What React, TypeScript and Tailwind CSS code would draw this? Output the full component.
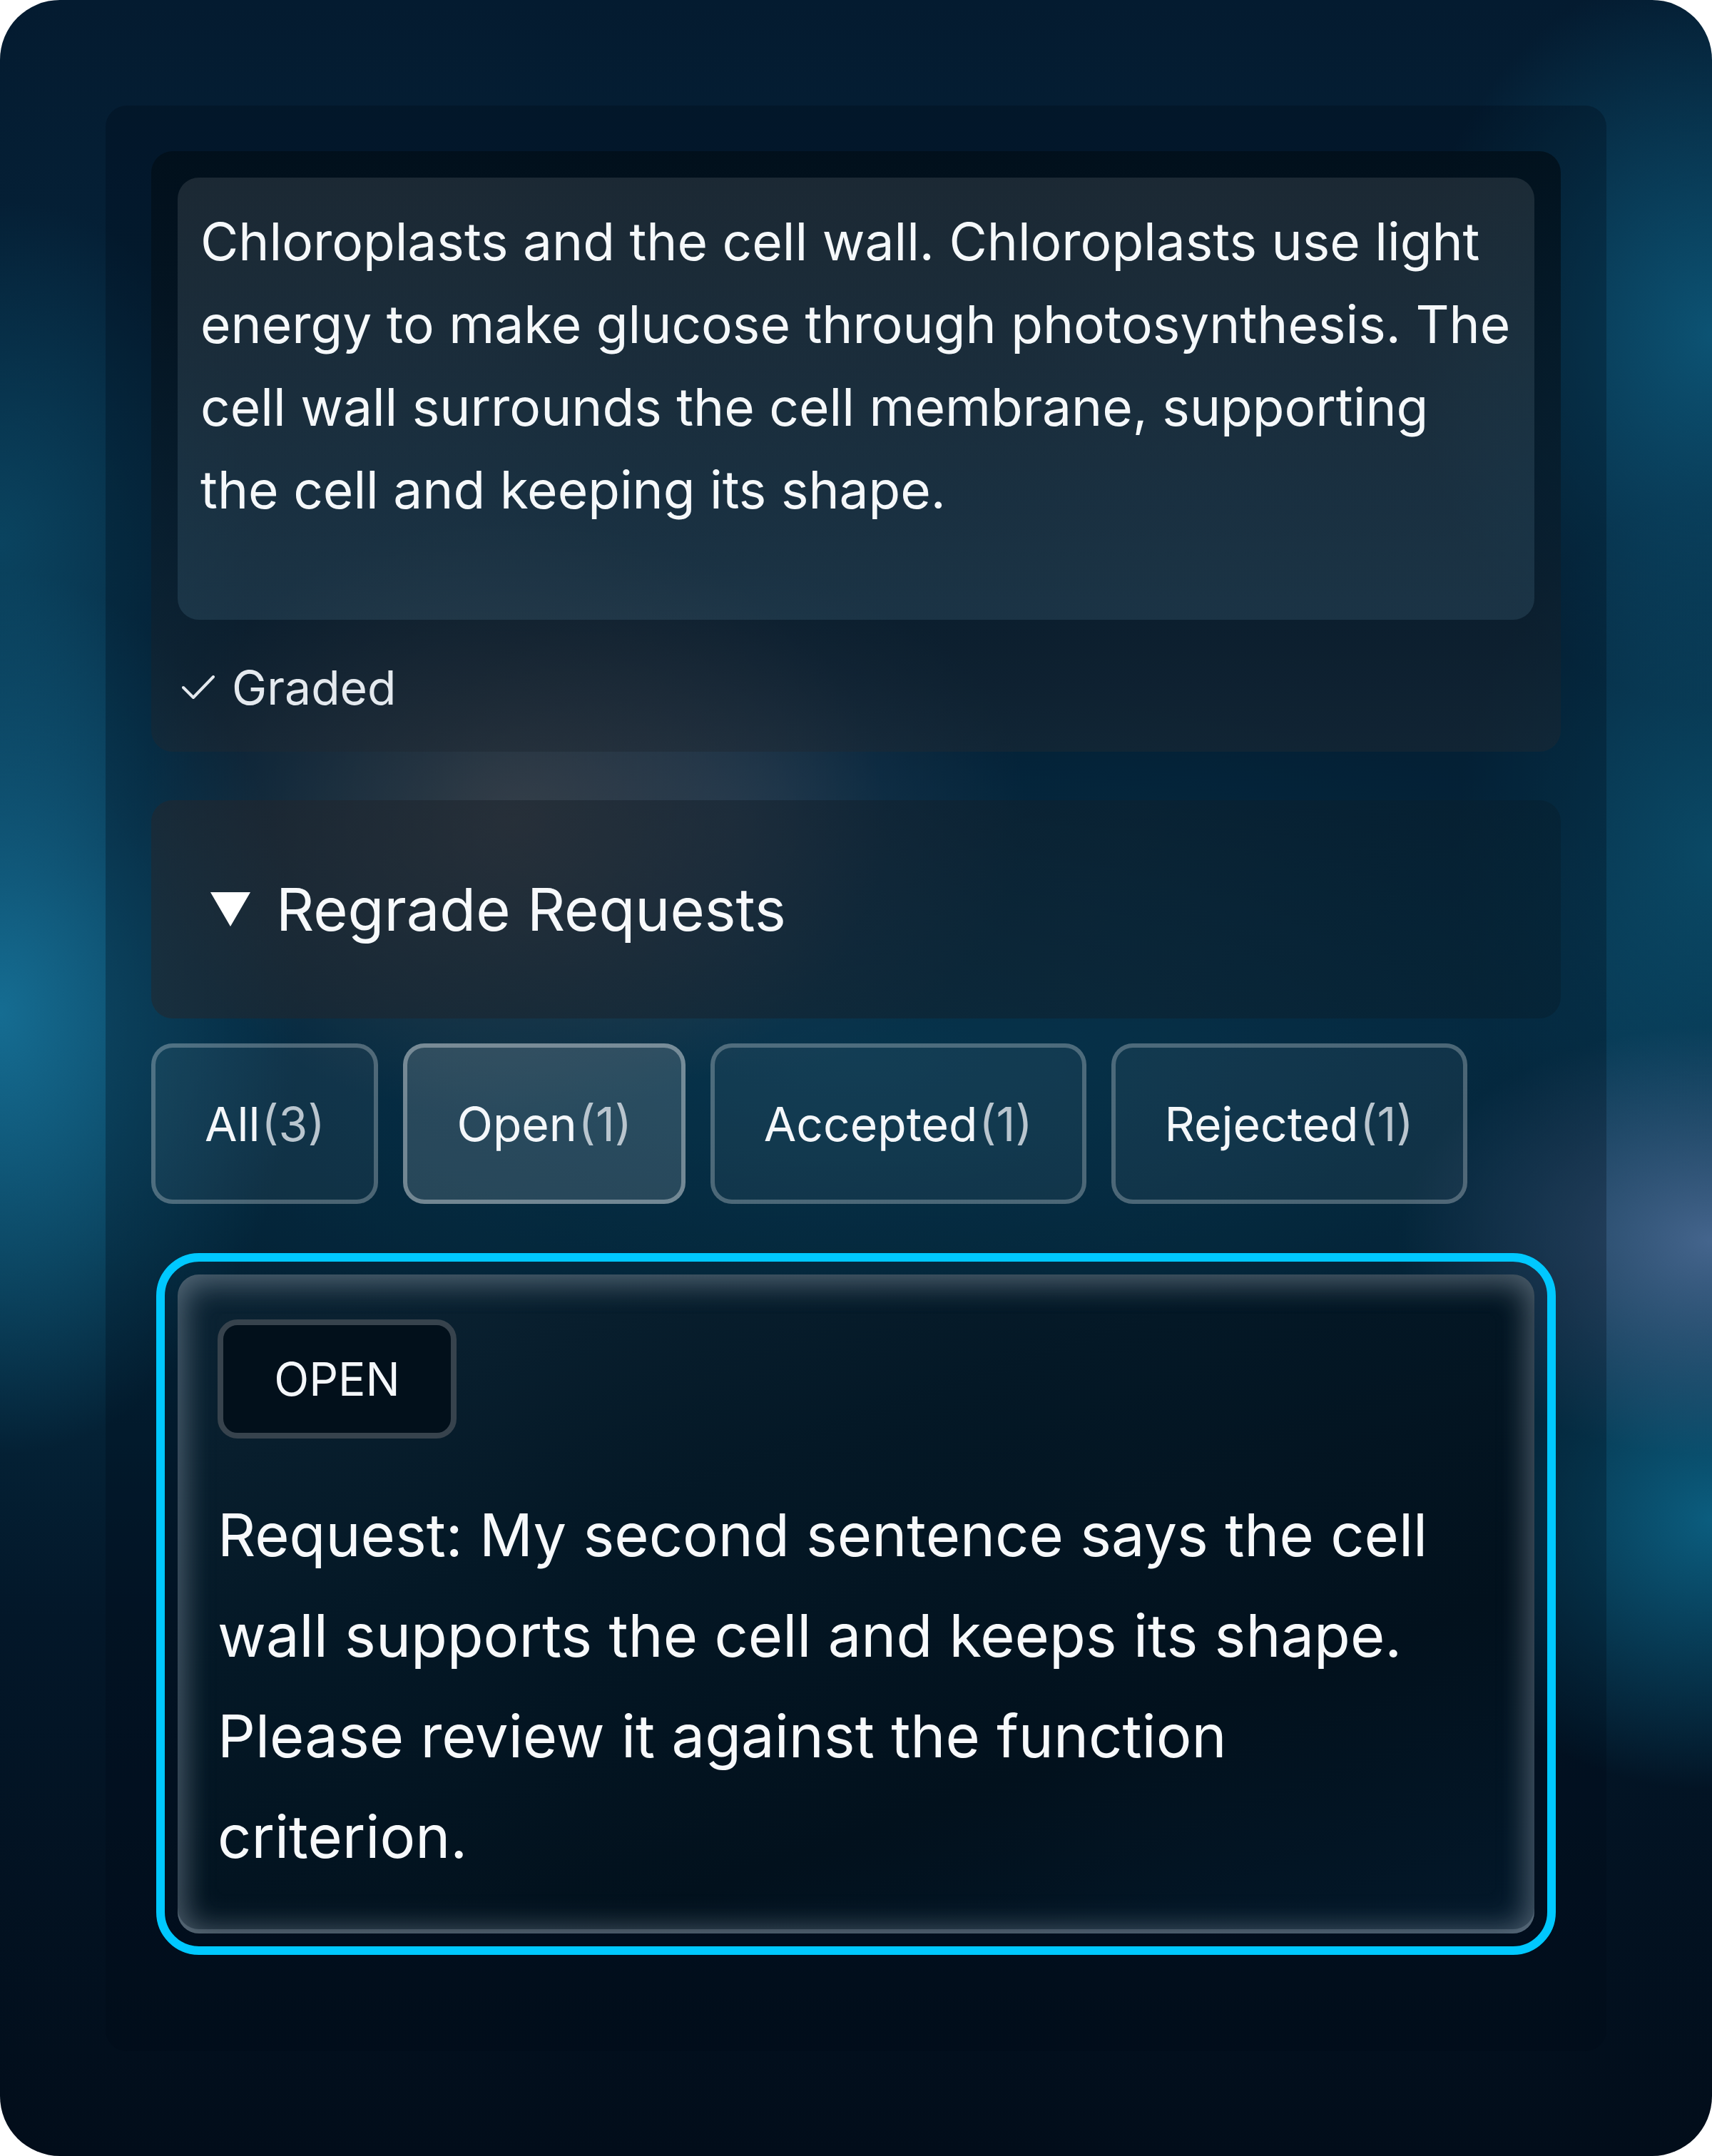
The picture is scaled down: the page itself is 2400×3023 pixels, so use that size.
import React from "react";

function FilterButton({ label, count, active }: { label: string; count: number; active?: boolean }) {
  return (
    <div
      className={
        "flex h-[225px] items-center justify-center rounded-[30px] border-[6px] px-[69px] " +
        (active ? "border-white/35 bg-white/[0.14]" : "border-white/25 bg-white/[0.05]")
      }
    >
      <span className="text-[66px] leading-none text-[#f4f7fa]">{label}</span>
      <span className="ml-[2px] text-[66px] leading-none text-[#b9c5ce]">({count})</span>
    </div>
  );
}

export default function App() {
  return (
    <div className="h-[3023px] w-[2400px] bg-white [font-family:Inter,'Noto_Sans',sans-serif]">
      <div className="h-[3023px] w-[2400px] overflow-hidden rounded-[84px] pt-[148px] pr-[148px] pb-[147px] pl-[148px] [background-image:radial-gradient(ellipse_520px_420px_at_720px_1150px,rgba(125,110,105,0.55),transparent),radial-gradient(ellipse_420px_360px_at_1020px_1150px,rgba(70,95,125,0.45),transparent),radial-gradient(ellipse_420px_620px_at_0px_1420px,rgba(22,112,150,0.95),transparent),radial-gradient(ellipse_360px_480px_at_0px_760px,rgba(12,80,110,0.7),transparent),radial-gradient(ellipse_420px_520px_at_2400px_470px,rgba(14,95,130,0.8),transparent),radial-gradient(ellipse_440px_300px_at_2400px_1740px,rgba(72,104,145,0.95),transparent),radial-gradient(ellipse_420px_380px_at_2400px_2130px,rgba(12,100,135,0.9),transparent),radial-gradient(ellipse_360px_500px_at_2400px_1200px,rgba(12,85,115,0.7),transparent),radial-gradient(ellipse_1300px_520px_at_1200px_1480px,rgba(14,85,115,0.6),transparent),linear-gradient(180deg,#041b30_0%,#062840_30%,#06304a_48%,#052c42_58%,#031729_75%,#020d1a_100%)]">
        <div className="flex h-full flex-col rounded-[30px] bg-[rgba(0,10,22,0.3)] px-[64px] pt-[64px]">
          {/* Answer card */}
          <div className="rounded-[30px] bg-[linear-gradient(180deg,rgba(1,14,24,0.8)_0%,rgba(10,24,36,0.55)_60%,rgba(30,40,50,0.5)_100%)] px-[37px] pt-[37px] pb-[42px]">
            <div className="h-[620px] rounded-[30px] bg-[linear-gradient(180deg,rgba(255,255,255,0.1)_0%,rgba(120,180,210,0.14)_100%)] pt-[32px] pl-[32px] pr-[12px] text-[73px] leading-[116px] text-[#f5f8fa]">
              Chloroplasts and the cell wall. Chloroplasts use light
              <br />
              energy to make glucose through photosynthesis. The
              <br />
              cell wall surrounds the cell membrane, supporting
              <br />
              the cell and keeping its shape.
            </div>
            <div className="mt-[47px] flex h-[96px] items-center pl-[6px]">
              <svg width="46" height="34" viewBox="0 0 46 34" className="shrink-0">
                <path d="M2 17 L16 31 L44 2" fill="none" stroke="#e4e9ee" strokeWidth="4" strokeLinecap="round" strokeLinejoin="round" />
              </svg>
              <span className="ml-[24px] text-[66px] leading-none text-[#e4e9ee]">Graded</span>
            </div>
          </div>

          {/* Regrade header */}
          <div className="mt-[68px] flex h-[306px] items-center rounded-[30px] bg-[linear-gradient(90deg,rgba(36,38,44,0.55)_0%,rgba(18,32,44,0.55)_50%,rgba(6,30,45,0.5)_100%)] pl-[83px]">
            <svg width="56" height="48" viewBox="0 0 56 48" className="shrink-0">
              <polygon points="0,0 56,0 28,48" fill="#ffffff" />
            </svg>
            <span className="ml-[36px] text-[83px] leading-none text-[#f7f9fb]">Regrade Requests</span>
          </div>

          {/* Filters */}
          <div className="mt-[35px] flex gap-[35px]">
            <FilterButton label="All" count={3} />
            <FilterButton label="Open" count={1} active />
            <FilterButton label="Accepted" count={1} />
            <FilterButton label="Rejected" count={1} />
          </div>

          {/* Request card */}
          <div className="mx-[7px] mt-[69px] rounded-[60px] border-[12px] border-[#00c8ff] p-[18px]">
            <div className="h-[924px] rounded-[30px] bg-[linear-gradient(160deg,#0c2434_0%,#041826_35%,#02111d_70%,#03182a_100%)] px-[56px] pt-[63px] shadow-[inset_0_8px_40px_4px_rgba(150,165,180,0.3),inset_0_0_45px_8px_rgba(150,165,180,0.32),inset_0_-6px_0_rgba(140,155,170,0.3)]">
              <div className="flex h-[167px] w-[335px] items-center justify-center rounded-[28px] border-[8px] border-[#37434d] bg-[#02101b]">
                <span className="text-[64px] leading-none text-[#f4f7fa]">OPEN</span>
              </div>
              <div className="mt-[65px] text-[83px] leading-[141px] text-[#f7f9fb]">
                Request: My second sentence says the cell
                <br />
                wall supports the cell and keeps its shape.
                <br />
                Please review it against the function
                <br />
                criterion.
              </div>
            </div>
          </div>
        </div>
      </div>
    </div>
  );
}
